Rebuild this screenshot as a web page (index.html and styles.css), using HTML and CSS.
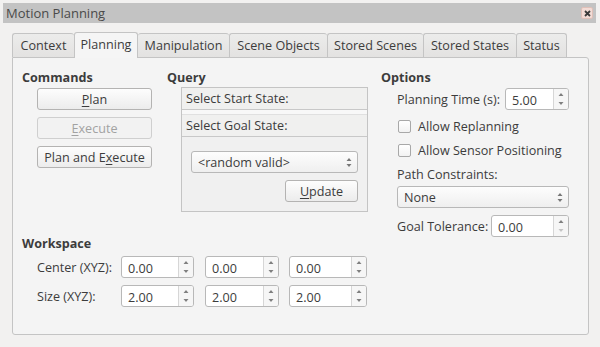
FILE: index.html
```html
<!DOCTYPE html>
<html>
<head>
<meta charset="utf-8">
<link rel="stylesheet" href="styles.css">
</head>
<body>
<div class="window">
  <div class="titlebar">
    <span class="title">Motion Planning</span>
    <span class="close"><svg width="7" height="7" viewBox="0 0 7 7"><path d="M1 1L6 6M6 1L1 6" stroke="#3a3a3a" stroke-width="1.8"/></svg></span>
  </div>
  <div class="tabs">
    <div class="tab t1">Context</div>
    <div class="tab t2 active">Planning</div>
    <div class="tab t3">Manipulation</div>
    <div class="tab t4">Scene Objects</div>
    <div class="tab t5">Stored Scenes</div>
    <div class="tab t6">Stored States</div>
    <div class="tab t7">Status</div>
  </div>
  <div class="pane">
    <div class="left">
      <div class="top">
        <div class="col commands">
          <div class="heading">Commands</div>
          <div class="btn"><u>P</u>lan</div>
          <div class="btn disabled"><u>E</u>xecute</div>
          <div class="btn">Plan and E<u>x</u>ecute</div>
        </div>
        <div class="col query">
          <div class="heading">Query</div>
          <div class="qbox">
            <div class="qhead">Select Start State:</div>
            <div class="qgap"></div>
            <div class="qhead">Select Goal State:</div>
            <div class="qbody">
              <div class="combo"><span>&lt;random valid&gt;</span><svg class="carr" width="6" height="11" viewBox="0 0 6 11"><path d="M3 1L5.5 4H0.5Z M3 10L5.5 7H0.5Z" fill="#777"/></svg></div>
              <div class="btn update"><u>U</u>pdate</div>
            </div>
          </div>
        </div>
      </div>
      <div class="workspace">
        <div class="heading">Workspace</div>
        <div class="wrow">
          <span class="wlbl">Center (XYZ):</span>
          <div class="spin s1"><span class="val">0.00</span><span class="sbtn"><svg width="6" height="20" viewBox="0 0 6 20"><path d="M3 4L5.5 7H0.5Z M3 16L5.5 13H0.5Z" fill="#808080"/></svg></span></div>
          <div class="spin s2"><span class="val">0.00</span><span class="sbtn"><svg width="6" height="20" viewBox="0 0 6 20"><path d="M3 4L5.5 7H0.5Z M3 16L5.5 13H0.5Z" fill="#808080"/></svg></span></div>
          <div class="spin s3"><span class="val">0.00</span><span class="sbtn"><svg width="6" height="20" viewBox="0 0 6 20"><path d="M3 4L5.5 7H0.5Z M3 16L5.5 13H0.5Z" fill="#808080"/></svg></span></div>
        </div>
        <div class="wrow">
          <span class="wlbl">Size (XYZ):</span>
          <div class="spin s1"><span class="val">2.00</span><span class="sbtn"><svg width="6" height="20" viewBox="0 0 6 20"><path d="M3 4L5.5 7H0.5Z M3 16L5.5 13H0.5Z" fill="#808080"/></svg></span></div>
          <div class="spin s2"><span class="val">2.00</span><span class="sbtn"><svg width="6" height="20" viewBox="0 0 6 20"><path d="M3 4L5.5 7H0.5Z M3 16L5.5 13H0.5Z" fill="#808080"/></svg></span></div>
          <div class="spin s3"><span class="val">2.00</span><span class="sbtn"><svg width="6" height="20" viewBox="0 0 6 20"><path d="M3 4L5.5 7H0.5Z M3 16L5.5 13H0.5Z" fill="#808080"/></svg></span></div>
        </div>
      </div>
    </div>
    <div class="col options">
      <div class="heading">Options</div>
      <div class="row ptime">
        <span class="lbl">Planning Time (s):</span>
        <div class="spin sp"><span class="val">5.00</span><span class="sbtn"><svg width="6" height="20" viewBox="0 0 6 20"><path d="M3 4L5.5 7H0.5Z M3 16L5.5 13H0.5Z" fill="#808080"/></svg></span></div>
      </div>
      <div class="check"><span class="box"></span>Allow Replanning</div>
      <div class="check"><span class="box"></span>Allow Sensor Positioning</div>
      <div class="lbl pc">Path Constraints:</div>
      <div class="combo wide"><span>None</span><svg class="carr" width="6" height="11" viewBox="0 0 6 11"><path d="M3 1L5.5 4H0.5Z M3 10L5.5 7H0.5Z" fill="#777"/></svg></div>
      <div class="row gtol">
        <span class="lbl">Goal Tolerance:</span>
        <div class="spin sg"><span class="val">0.00</span><span class="sbtn"><svg width="6" height="20" viewBox="0 0 6 20"><path d="M3 4L5.5 7H0.5Z" fill="#808080"/><path d="M3 16L5.5 13H0.5Z" fill="#c4c4c4"/></svg></span></div>
      </div>
    </div>
  </div>
</div>
</body>
</html>
```
FILE: styles.css
```css
* { box-sizing: border-box; }
html, body { margin: 0; padding: 0; }
body {
  width: 600px; height: 347px; overflow: hidden;
  background: #f2f1f0;
  font-family: "Open Sans", "Noto Sans", sans-serif;
  font-size: 12.6px;
  color: #3c3c3c;
}
u { text-decoration: underline; text-underline-offset: 2px; }
.window { padding: 3px 4px 0 3px; }
.titlebar {
  height: 20px;
  background: #c3c3c3;
  display: flex; align-items: center; justify-content: space-between;
  padding: 0 3px 0 3px;
}
.title { font-size: 13px; color: #4a4a4a; }
.close {
  width: 12px; height: 12px; border-radius: 2px;
  background: #f3dcd6; border: 1px solid #e0c0b8;
  display: flex; align-items: center; justify-content: center;
}
.tabs {
  display: flex; margin: 10px 0 0 9px; height: 24px; align-items: flex-end;
  position: relative; z-index: 1;
}
.tab {
  height: 24px; padding-top: 3px; text-align: center;
  border: 1px solid #c4c4c4; border-bottom: none; border-right: none;
  border-radius: 3px 3px 0 0;
  background: linear-gradient(#ececeb, #e3e2e1);
  font-size: 12.6px; color: #3c3c3c; white-space: nowrap;
}
.t1 { width: 62px; }
.t2 { width: 64px; }
.t3 { width: 91px; }
.t4 { width: 98px; }
.t5 { width: 96px; }
.t6 { width: 93px; }
.t7 { width: 51px; }
.tab:last-child { border-right: 1px solid #c4c4c4; }
.tab.active {
  height: 26px; background: #f5f5f5; border-right: 1px solid #c4c4c4;
  margin-bottom: -1px; padding-top: 3px;
}
.tab.active + .tab { border-left: none; }
.pane {
  margin-left: 9px; width: 577px; height: 278px;
  border: 1px solid #c4c4c4; border-radius: 0 3px 3px 3px;
  background: #f4f4f4;
  padding: 11px 0 0 9px;
  display: flex;
}
.left { width: 359px; }
.top { display: flex; }
.heading { font-weight: bold; font-size: 12.6px; color: #3c3c3c; height: 18px; }
.col.commands { width: 145px; }
.btn {
  width: 115px; height: 22px; margin-left: 15px;
  border: 1px solid #b4b3b2; border-radius: 3px;
  background: linear-gradient(#fdfdfd, #ececec);
  display: flex; align-items: center; justify-content: center;
  font-size: 12.6px; color: #3c3c3c;
}
.commands .btn { margin-bottom: 7px; }
.commands .heading { margin-bottom: 1px; }
.btn.disabled { color: #a2a2a2; border-color: #cfcfcf; background: #f2f2f2; }
.col.query { width: 214px; }
.qbox {
  margin-left: 14px; width: 187px; height: 125px;
  border: 1px solid #c4c4c4; background: #f0f0f0;
}
.qhead {
  height: 22px; padding: 2px 0 0 4px;
  background: #f0f0ef; border-bottom: 1px solid #c8c8c8;
}
.qgap { height: 5px; background: #f8f8f8; border-bottom: 1px solid #e0e0e0; }
.qbody { padding: 14px 9px 0 9px; display: flex; flex-direction: column; align-items: flex-end; }
.combo {
  width: 167px; height: 22px;
  border: 1px solid #b8b8b8; border-radius: 3px;
  background: linear-gradient(#fdfdfd, #efefef);
  display: flex; align-items: center; justify-content: space-between;
  padding: 0 5px 0 6px;
}
.update { width: 73px; margin: 7px 0 0 0; }
.col.options { width: 188px; margin-left: 0; }
.options .heading { margin-bottom: 1px; }
.row { display: flex; align-items: center; justify-content: space-between; }
.lbl { margin-left: 16px; white-space: nowrap; }
.spin {
  height: 22px; display: flex;
  border: 1px solid #b8b8b8; border-radius: 3px; background: #fff;
  overflow: hidden;
}
.spin .val { flex: 1; padding: 3px 0 0 6px; }
.sbtn {
  width: 15px; border-left: 1px solid #d6d6d6; background: #f6f6f6;
  display: flex; align-items: center; justify-content: center;
}
.sp { width: 64px; }
.sg { width: 78px; }
.s1 { width: 73px; margin-right: 11px; }
.s2 { width: 74px; margin-right: 10px; }
.s3 { width: 78px; }
.check { display: flex; align-items: center; margin: 9px 0 0 17px; height: 14px; }
.check + .check { margin-top: 10px; }
.box {
  width: 13px; height: 13px; border: 1px solid #a8a8a8; border-radius: 2px;
  background: linear-gradient(#fff, #f2f2f2); margin-right: 7px;
}
.lbl.pc { margin-top: 9px; height: 20px; }
.combo.wide { width: 172px; margin-left: 16px; }
.gtol { margin-top: 7px; }
.workspace { margin-top: 23px; }
.workspace .heading { margin-bottom: 3px; }
.wrow { display: flex; align-items: center; margin-left: 15px; margin-bottom: 7px; }
.wlbl { width: 84px; }
```
